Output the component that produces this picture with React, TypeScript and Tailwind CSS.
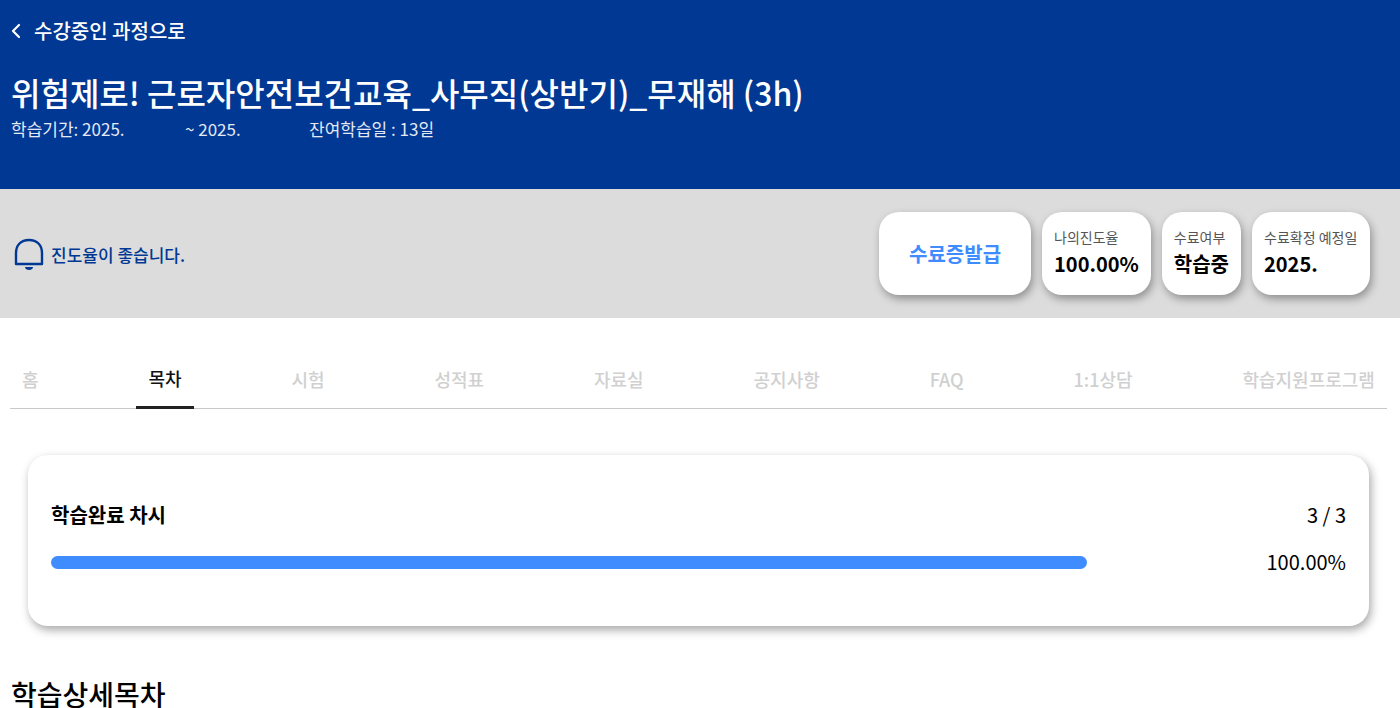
import React from "react";

const font = { };
const tabs = ["홈", "목차", "시험", "성적표", "자료실", "공지사항", "FAQ", "1:1상담", "학습지원프로그램"];

function Stat({ label, value }: { label: string; value: string }) {
  return (
    <div className="h-[83px] rounded-[20px] bg-white px-3 pt-[15px] shadow-[2px_4px_8px_rgba(0,0,0,0.35)]">
      <div className="text-[14px] leading-[20px] text-[#555555]">{label}</div>
      <div className="mt-[2px] text-[20px] leading-[29px] font-bold text-black">{value}</div>
    </div>
  );
}

export default function App() {
  return (
    <div className="h-[708px] w-[1400px] overflow-hidden bg-white font-['Noto_Sans_CJK_KR','Noto_Sans',sans-serif]">
      <header className="h-[189px] bg-[#003893] px-[11px] pt-[17px] text-white">
        <div className="flex h-[28px] items-center gap-[13px]">
          <svg width="10" height="16" viewBox="0 0 10 16" fill="none" stroke="#ffffff" strokeWidth="2.2" strokeLinecap="round" strokeLinejoin="round">
            <path d="M8 2 L2 8 L8 14" />
          </svg>
          <span className="text-[20px] leading-[28px] font-medium">수강중인 과정으로</span>
        </div>
        <h1 className="mt-[22px] text-[32px] leading-[50px] font-medium">위험제로! 근로자안전보건교육_사무직(상반기)_무재해 (3h)</h1>
        <div className="flex text-[17px] leading-[24px] text-[#e4e9f3]">
          <span className="w-[174px]">학습기간: 2025.</span>
          <span className="w-[124px]">~ 2025.</span>
          <span>잔여학습일 : 13일</span>
        </div>
      </header>

      <section className="flex h-[129px] items-center justify-between bg-[#dcdcdc] pr-[30px] pl-[14px]">
        <div className="flex items-center gap-[7px] pt-[2px]">
          <svg width="30" height="34" viewBox="0 0 30 34" fill="none">
            <path d="M2 26 V15 C2 7 7 2 15 2 C23 2 28 7 28 15 V26 Z" stroke="#003893" strokeWidth="2.4" strokeLinejoin="round" />
            <path d="M11 29 H19 C19 33 11 33 11 29 Z" fill="#003893" />
          </svg>
          <span className="text-[17px] leading-[24px] font-medium text-[#003893]">진도율이 좋습니다.</span>
        </div>
        <div className="flex items-center gap-[11px]">
          <button className="flex h-[83px] w-[152px] items-center justify-center rounded-[20px] bg-white text-[20px] font-bold text-[#3f8cff] shadow-[2px_4px_8px_rgba(0,0,0,0.35)]">수료증발급</button>
          <Stat label="나의진도율" value="100.00%" />
          <Stat label="수료여부" value="학습중" />
          <div className="w-[118px]"><Stat label="수료확정 예정일" value="2025." /></div>
        </div>
      </section>

      <nav className="mx-[10px] mt-[36px] flex h-[55px] w-[1377px] justify-between border-b border-[#c8c8c8]">
        {tabs.map((t) => (
          <div key={t} className={`-mb-px flex h-[55px] items-center px-3 pb-[4px] text-[18px] font-medium ${t === "목차" ? "border-b-[3px] border-[#222222] text-[#111111]" : "text-[#d0d0d0]"}`}>
            {t}
          </div>
        ))}
      </nav>

      <section className="mx-[28px] mt-[46px] h-[171px] w-[1341px] rounded-[20px] bg-white px-[23px] pt-[45px] shadow-[2px_4px_10px_rgba(0,0,0,0.35)]">
        <div className="flex items-center justify-between">
          <span className="text-[20px] leading-[30px] font-bold text-black">학습완료 차시</span>
          <span className="text-[20px] leading-[30px] text-black">3 / 3</span>
        </div>
        <div className="mt-[17px] flex items-center justify-between">
          <div className="h-[13px] w-[1036px] rounded-full bg-[#3f8cff]" />
          <span className="text-[20px] leading-[30px] text-black">100.00%</span>
        </div>
      </section>

      <h2 className="mt-[48px] ml-[11px] text-[28px] leading-[40px] font-medium text-black">학습상세목차</h2>
    </div>
  );
}
